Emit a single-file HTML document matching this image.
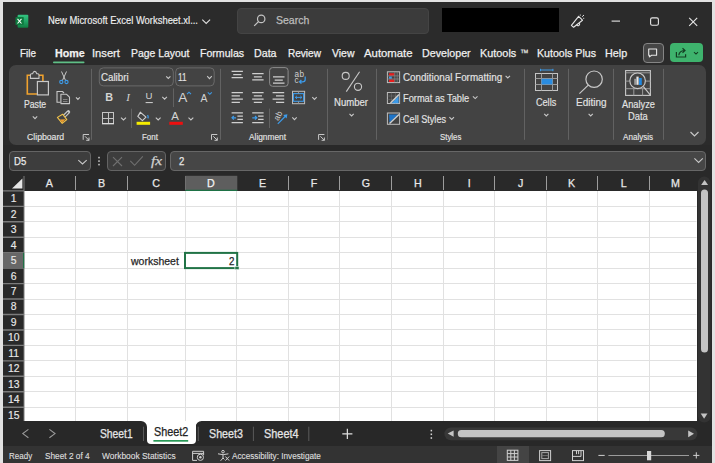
<!DOCTYPE html>
<html><head><meta charset="utf-8"><style>
html,body{margin:0;padding:0}
body{width:715px;height:463px;overflow:hidden;position:relative;background:#262626;font-family:"Liberation Sans",sans-serif}
.a{position:absolute;box-sizing:border-box}
.t{position:absolute;white-space:pre;line-height:1;transform-origin:0 0;-webkit-text-stroke:0.25px currentColor}
svg{position:absolute;overflow:visible}

</style></head><body>
<!-- window borders -->
<div class="a" style="left:0;top:0;width:715px;height:2px;background:#e2e2e2"></div>
<div class="a" style="left:0;top:0;width:3px;height:463px;background:#e2e2e2"></div>
<div class="a" style="left:712px;top:0;width:3px;height:463px;background:#e2e2e2"></div>
<!-- title bar -->
<div class="a" style="left:3px;top:2px;width:709px;height:143.4px;background:#2b2b2b"></div>
<div class="a" style="left:236.5px;top:8px;width:192px;height:26px;background:#3b3b3b;border:1px solid #444;border-radius:4px"></div>
<div class="a" style="left:442px;top:8px;width:117px;height:24px;background:#000"></div>
<!-- comment/share buttons -->
<div class="a" style="left:642.7px;top:43px;width:21px;height:19.8px;background:#464646;border:1px solid #858585;border-radius:4px"></div>
<div class="a" style="left:669.9px;top:43px;width:33.1px;height:19.3px;background:#3eb36d;border-radius:4px"></div>
<!-- ribbon panel -->
<div class="a" style="left:9px;top:65.4px;width:697px;height:80px;background:#434343;border-radius:7px"></div>
<!-- formula bar -->
<div class="a" style="left:3px;top:145.4px;width:709px;height:30.5px;background:#292929"></div>
<div class="a" style="left:9px;top:151.3px;width:82px;height:19.6px;background:#3d3d3d;border:1px solid #646464;border-radius:4px"></div>
<div class="a" style="left:107.2px;top:151.3px;width:59.2px;height:19.6px;background:#3d3d3d;border:1px solid #646464;border-radius:4px"></div>
<div class="a" style="left:169.8px;top:151.3px;width:536px;height:19.6px;background:#464646;border:1px solid #676767;border-radius:4px"></div>
<!-- headers -->
<div class="a" style="left:3px;top:175.8px;width:694px;height:15.1px;background:#292929"></div>
<div class="a" style="left:3px;top:190.9px;width:21px;height:230.1px;background:#292929"></div>
<!-- grid -->
<div class="a" style="left:24px;top:190.9px;width:672.5px;height:230.1px;background:#fff"></div>
<!-- scrollbar area -->
<div class="a" style="left:696.5px;top:175.8px;width:15.5px;height:245.2px;background:#292929"></div>
<!-- sheet tab bar -->
<div class="a" style="left:3px;top:421px;width:709px;height:25px;background:#282828"></div>
<!-- status bar -->
<div class="a" style="left:3px;top:446px;width:709px;height:17px;background:#333"></div>
<div class="a" style="left:497.2px;top:446px;width:32px;height:17px;background:#444"></div>
<!-- active sheet tab -->
<div class="a" style="left:147px;top:421px;width:48.6px;height:22.5px;background:#fff;border-radius:0 0 4px 4px"></div>
<svg style="left:0;top:0" width="715" height="463" viewBox="0 0 715 463">
<defs>
<linearGradient id="xg" x1="0" y1="0" x2="0" y2="1"><stop offset="0" stop-color="#33c481"/><stop offset="0.5" stop-color="#21a366"/><stop offset="1" stop-color="#107c41"/></linearGradient>
</defs>
<!-- excel logo -->
<rect x="17.6" y="14.8" width="10.7" height="13" rx="1" fill="url(#xg)"/>
<rect x="15.5" y="16.9" width="8.3" height="8.1" rx="0.8" fill="#0f7a3f"/>
<path d="M17.5,18.9 L21.5,23.5 M21.5,18.9 L17.5,23.5" stroke="#fff" stroke-width="1.05"/>
<!-- search icon -->
<circle cx="261.2" cy="18.9" r="3.7" fill="none" stroke="#c4c4c4" stroke-width="1.2"/>
<path d="M258.5,21.6 L254.2,25.9" stroke="#c4c4c4" stroke-width="1.3"/>
<!-- megaphone -->
<path d="M571.4,25.4 L578.6,16.3 L582.5,20.2 L573.6,27.3 Z" fill="none" stroke="#e6e6e6" stroke-width="1.1" stroke-linejoin="round"/>
<path d="M576.6,24.9 A1.6,1.6 0 0 0 579.4,23.2" fill="none" stroke="#e6e6e6" stroke-width="1.1"/>
<path d="M580.3,14.6 v1 M582.2,16.7 L584,15 M583.2,18.3 h1" stroke="#e6e6e6" stroke-width="1"/>
<!-- window controls -->
<path d="M611.6,21.1 H620" stroke="#e6e6e6" stroke-width="1.1"/>
<rect x="650.6" y="17.9" width="7.8" height="7.4" rx="1.6" fill="none" stroke="#e6e6e6" stroke-width="1.1"/>
<path d="M689.2,17.8 L697.2,25.8 M697.2,17.8 L689.2,25.8" stroke="#e6e6e6" stroke-width="1.1"/>
<!-- comment icon -->
<path d="M648.7,49 H656.6 V55.3 H651.6 L649.4,56.9 V55.3 H648.7 Z" fill="none" stroke="#e6e6e6" stroke-width="1.1" stroke-linejoin="round"/>
<!-- share icon -->
<path d="M676.4,52 V57 H685.6 V54.2" fill="none" stroke="#143d22" stroke-width="1.2"/>
<path d="M678.8,55.3 Q679.3,50.8 684.5,50.5 M682.5,48.2 L685,50.5 L682.5,52.8" fill="none" stroke="#143d22" stroke-width="1.2"/>
<path d="M694,52.2 L696,54.1 L698,52.2" fill="none" stroke="#143d22" stroke-width="1.1"/>
<!-- home underline -->
<rect x="53" y="61.6" width="31.5" height="1.7" rx="0.8" fill="#5fbf86"/>
<!-- ribbon separators -->
<g stroke="#626262" stroke-width="1">
<path d="M91.5,68.8 V139.8 M220.5,68.8 V139.8 M327.5,68.8 V139.8 M376.5,68.8 V139.8 M524.5,68.8 V139.8 M568.5,68.8 V139.8 M613.5,68.8 V139.8 M663.5,68.8 V139.8"/>
<path d="M173.5,88.4 V107 M131.5,108.7 V128 M269.5,108.6 V128"/>
</g>
<!-- PASTE -->
<path d="M30.8,75.2 H27.3 V94 H37.2" fill="none" stroke="#f0a22e" stroke-width="1.6"/>
<path d="M38.6,75.2 H42.9 V81.2" fill="none" stroke="#f0a22e" stroke-width="1.6"/>
<path d="M30.4,78.4 V75 Q30.4,73.8 31.6,73.8 H32.6 Q33.2,71.4 34.7,71.4 Q36.2,71.4 36.8,73.8 H37.8 Q39,73.8 39,75 V78.4 Z" fill="#434343" stroke="#c8c8c8" stroke-width="1.1" stroke-linejoin="round"/>
<rect x="37.4" y="81.5" width="11" height="13.4" fill="#434343" stroke="#c8c8c8" stroke-width="1.2"/>
<!-- chevrons -->
<g fill="none" stroke="#c8c8c8" stroke-width="1.1">
<path d="M32.8,116.4 L35,118.6 L37.2,116.4"/>
<path d="M76,97.4 L77.9,99.4 L79.8,97.4"/>
<path d="M162.3,96.8 L164.6,99.1 L166.9,96.8"/>
<path d="M121,117.6 L123.5,120 L126,117.6"/>
<path d="M155.8,117.6 L158.2,120 L160.6,117.6"/>
<path d="M188.5,117.6 L190.9,120 L193.3,117.6"/>
<path d="M312.3,97.1 L314.5,99.4 L316.7,97.1"/>
<path d="M292.3,117.4 L294.5,119.6 L296.7,117.4"/>
<path d="M349.5,113.8 L351.6,116 L353.7,113.8"/>
<path d="M505.6,75.8 L507.8,78 L510,75.8"/>
<path d="M472.9,96.4 L475.2,98.6 L477.5,96.4"/>
<path d="M449.4,117.2 L451.7,119.4 L454,117.2"/>
<path d="M544.2,113.8 L546.3,116 L548.4,113.8"/>
<path d="M588.6,113.8 L590.7,116 L592.8,113.8"/>
<path d="M166.2,76.3 L168.3,78.5 L170.4,76.3"/>
<path d="M207.2,76.2 L209.5,78.6 L211.8,76.2"/>
<path d="M78.3,160.1 L82.5,164 L86.7,160.1"/>
<path d="M694.4,158.4 L698.6,162.4 L702.8,158.4"/>
<path d="M690.5,132 L694.5,136 L698.5,132" stroke-width="1.2"/>
</g>
<!-- scissors -->
<g fill="none" stroke="#c8c8c8" stroke-width="1">
<path d="M61.5,71.5 L65.6,80.6 M66.5,71.5 L62.4,80.6"/>
</g>
<circle cx="61.3" cy="82" r="1.6" fill="none" stroke="#3d9be9" stroke-width="1.1"/>
<circle cx="66.5" cy="82" r="1.6" fill="none" stroke="#3d9be9" stroke-width="1.1"/>
<!-- copy -->
<path d="M60.5,102.3 H57 V91.5 H62.5 L64,93" fill="none" stroke="#c8c8c8" stroke-width="1.1"/>
<path d="M60.9,94.3 H66.6 L69.5,97.2 V103.6 H60.9 Z" fill="#434343" stroke="#c8c8c8" stroke-width="1.1" stroke-linejoin="round"/>
<path d="M63,99.5 H67.5 M63,101.5 H67.5" stroke="#8a8a8a" stroke-width="0.9"/>
<!-- format painter -->
<path d="M63.6,116.8 L68.4,112" stroke="#c8c8c8" stroke-width="3.6" stroke-linecap="round"/>
<path d="M64.2,116.2 L67.8,112.6" stroke="#434343" stroke-width="1.3" stroke-linecap="round"/>
<path d="M57.4,117.4 L62.6,114.2 L66.8,119.6 L62.2,123.3 Z" fill="#434343" stroke="#f2c24a" stroke-width="1.1" stroke-linejoin="round"/>
<path d="M59.8,119.6 L65.6,119.2 L62.2,122.6 Z" fill="#ec9a2c"/>
<!-- dialog launchers -->
<g fill="none" stroke="#c8c8c8" stroke-width="1">
<path d="M83.2,139.8 V134.5 H89 M85,136.3 L89,140.3 M89,137.5 V140.3 H86.2"/>
<path d="M211.5,139.8 V134.5 H217.3 M213.3,136.3 L217.3,140.3 M217.3,137.5 V140.3 H214.5"/>
<path d="M318.6,139.8 V134.5 H324.4 M320.4,136.3 L324.4,140.3 M324.4,137.5 V140.3 H321.6"/>
</g>
<!-- B I U -->
<text x="105.2" y="100.9" font-family="Liberation Sans" font-weight="700" font-size="10.8" fill="#d4d4d4">B</text>
<text x="126.3" y="100.9" font-family="Liberation Serif" font-style="italic" font-size="11" fill="#d4d4d4">I</text>
<text x="145.4" y="99" font-family="Liberation Sans" font-size="9.6" fill="#d4d4d4">U</text>
<path d="M145.6,102.6 H152.8" stroke="#d4d4d4" stroke-width="1"/>
<!-- grow/shrink font -->
<text x="178.2" y="102.1" font-family="Liberation Sans" font-size="13.6" fill="#d4d4d4">A</text>
<path d="M187,94.2 L189,92.2 L191,94.2" fill="none" stroke="#3d9be9" stroke-width="1.1"/>
<text x="200.6" y="102.1" font-family="Liberation Sans" font-size="10.4" fill="#d4d4d4">A</text>
<path d="M207.8,92.3 L209.8,94.3 L211.8,92.3" fill="none" stroke="#3d9be9" stroke-width="1.1"/>
<!-- borders icon -->
<g fill="none" stroke="#c4c4c4" stroke-width="1">
<rect x="102.5" y="112.5" width="11" height="11"/>
<path d="M108.5,112.5 V123.5 M102.5,118.5 H113.5"/>
</g>
<path d="M102,123.7 H114" stroke="#dcdcdc" stroke-width="1.3"/>
<!-- fill color -->
<path d="M140.5,112.4 L146,117.2 L142.4,120.6 L137.8,116.4 Z" fill="none" stroke="#d0d0d0" stroke-width="1.1" stroke-linejoin="round"/>
<path d="M138.8,113.8 L141,111.8" stroke="#d0d0d0" stroke-width="1"/>
<path d="M147.6,115 Q148.7,117 147.8,118.4" fill="none" stroke="#3d9be9" stroke-width="1.3"/>
<rect x="136.6" y="121.8" width="13.5" height="3" fill="#f5ec00"/>
<!-- font color -->
<text x="171.3" y="120.3" font-family="Liberation Sans" font-size="11.4" fill="#d4d4d4">A</text>
<rect x="169.3" y="121.8" width="13.5" height="3" fill="#ee0f0f"/>
<!-- alignment lines -->
<g stroke="#cfcfcf" stroke-width="1.25">
<path d="M231.6,71.4 H242.9 M233.2,74.5 H241.4 M231.6,77.7 H242.9"/>
<path d="M252.2,73.6 H263.6 M253.9,76.8 H261.9 M252.2,79.9 H263.6"/>
<path d="M273,76.9 H284.5 M274.7,80 H282.8 M273,83.1 H284.5"/>
<path d="M231.6,92.6 H242.9 M231.6,95.8 H239.9 M231.6,99 H242.9 M231.6,102.3 H239.9"/>
<path d="M252.2,92.6 H263.6 M253.8,95.8 H262 M252.2,99 H263.6 M253.8,102.3 H262"/>
<path d="M272.6,92.6 H284.2 M276,95.8 H284.2 M272.6,99 H284.2 M276,102.3 H284.2"/>
<path d="M231.6,112.9 H242.9 M237.4,116.1 H242.9 M237.4,119.4 H242.9 M231.6,122.7 H242.9"/>
<path d="M252.2,112.9 H263.6 M258.1,116.1 H263.6 M258.1,119.4 H263.6 M252.2,122.7 H263.6"/>
</g>
<rect x="269.6" y="67.6" width="18.5" height="18.7" rx="3" fill="none" stroke="#8c8c8c" stroke-width="1"/>
<!-- indent arrows -->
<path d="M236,117.8 H232 M233.8,116 L232,117.8 L233.8,119.6" fill="none" stroke="#3d9be9" stroke-width="1.2"/>
<path d="M252.3,117.8 H256.8 M255,116 L256.8,117.8 L255,119.6" fill="none" stroke="#3d9be9" stroke-width="1.2"/>
<!-- wrap text -->
<text x="294.6" y="77.3" font-family="Liberation Sans" font-size="8.2" fill="#d0d0d0" letter-spacing="0.3">ab</text>
<text x="294.4" y="82.6" font-family="Liberation Sans" font-size="8.2" fill="#d0d0d0">c</text>
<path d="M305.2,76.6 V79.4 Q305.2,81.8 302.6,81.8 H299.6 M301.4,80 L299.5,81.8 L301.4,83.6" fill="none" stroke="#3d9be9" stroke-width="1.3"/>
<!-- merge -->
<rect x="292.5" y="91.3" width="12.1" height="12.4" fill="none" stroke="#bdbdbd" stroke-width="1"/>
<rect x="293.5" y="93.6" width="10.1" height="7.7" fill="none" stroke="#3d9be9" stroke-width="1.1"/>
<path d="M298.5,91.3 V93.6 M298.5,101.3 V103.7" stroke="#9a9a9a" stroke-width="0.9"/>
<path d="M295.4,97.4 H301.8 M296.9,95.9 L295.3,97.4 L296.9,98.9 M300.3,95.9 L301.9,97.4 L300.3,98.9" fill="none" stroke="#3d9be9" stroke-width="1"/>
<!-- orientation -->
<text x="0" y="0" font-family="Liberation Sans" font-size="8.4" fill="#d0d0d0" transform="translate(278.2,121.2) rotate(-62)">ab</text>
<path d="M277.8,123.8 L285.6,116" fill="none" stroke="#3d9be9" stroke-width="1.2"/><path d="M287.4,114.2 L286.6,118.4 L283.2,115 Z" fill="#3d9be9"/>
<!-- percent -->
<circle cx="345.7" cy="75.9" r="3.5" fill="none" stroke="#c8c8c8" stroke-width="1.1"/>
<circle cx="358" cy="86.8" r="3.6" fill="none" stroke="#c8c8c8" stroke-width="1.1"/>
<path d="M359.6,71.8 L346.3,91.6" stroke="#c8c8c8" stroke-width="1.1"/>
<!-- conditional formatting icon -->
<rect x="387.4" y="71.8" width="12.2" height="10.8" fill="none" stroke="#bdbdbd" stroke-width="1"/>
<rect x="389" y="73.2" width="5.4" height="2.6" fill="#e81e1e"/>
<rect x="389" y="76.5" width="2.8" height="2.3" fill="#3d9be9"/>
<rect x="389" y="79.4" width="5.4" height="2.6" fill="#e81e1e"/>
<path d="M394.8,71.8 V82.6 M397.2,71.8 V82.6 M387.4,75.9 H399.6 M387.4,79 H399.6" stroke="#8a8a8a" stroke-width="0.7"/>
<!-- format as table icon -->
<rect x="387.4" y="92.5" width="12.2" height="11" fill="none" stroke="#bdbdbd" stroke-width="1"/>
<path d="M391.4,92.5 V103.5 M395.4,92.5 V103.5 M387.4,96 H399.6 M387.4,99.6 H399.6" stroke="#8a8a8a" stroke-width="0.7" stroke-dasharray="1,1"/>
<path d="M391.5,103.3 L398.6,96 V103.3 Z" fill="#3d9be9"/>
<path d="M390.5,103 L399,94.5" stroke="#d0d0d0" stroke-width="1.4"/>
<!-- cell styles icon -->
<rect x="387.4" y="113" width="12.2" height="11.3" fill="none" stroke="#bdbdbd" stroke-width="1"/>
<path d="M389,114.6 H398 L389.5,122.6 Z" fill="#1e74c8"/>
<path d="M389.5,123.5 L399,114.4" stroke="#d0d0d0" stroke-width="1.4"/>
<!-- cells icon -->
<rect x="535.5" y="73.5" width="22" height="17" fill="none" stroke="#c4c4c4" stroke-width="1"/>
<path d="M541.5,73.5 V90.5 M552.5,73.5 V90.5 M535.5,78.5 H557.5 M535.5,84.5 H557.5" stroke="#9a9a9a" stroke-width="1"/>
<rect x="541.5" y="78.8" width="11" height="5.6" fill="#2a8ce0"/>
<path d="M540.2,70 H553.2 M540.5,68.8 V71.2 M552.9,68.8 V71.2" stroke="#3d9be9" stroke-width="1"/>
<!-- editing magnifier -->
<circle cx="594.1" cy="79.2" r="8.2" fill="none" stroke="#c8c8c8" stroke-width="1.2"/>
<path d="M588.3,85.1 L579.4,93.6" stroke="#c8c8c8" stroke-width="1.2"/>
<!-- analyze data icon -->
<rect x="625.6" y="70.6" width="24.8" height="24.8" fill="none" stroke="#c8c8c8" stroke-width="1.1"/>
<path d="M625.6,72.8 H650.4 M625.6,88.7 H650.4 M633.8,88.7 V95.4 M642.6,88.7 V95.4 M625.6,81.1 H629.4 M646,81.1 H650.4" stroke="#9a9a9a" stroke-width="1"/>
<circle cx="637.6" cy="80.8" r="7.8" fill="#434343" stroke="#c8c8c8" stroke-width="1.2"/>
<path d="M643.4,86.6 L650.6,95.3" stroke="#c8c8c8" stroke-width="1.2"/>
<rect x="634.2" y="78.8" width="1.8" height="6" fill="#9a9a9a"/>
<rect x="636.4" y="76.6" width="2.2" height="8.2" fill="#e6e6e6"/>
<rect x="639" y="78" width="2.8" height="7" fill="#1f86de"/>
</svg>
<svg style="left:0;top:0" width="715" height="463" viewBox="0 0 715 463">
<path d="M75.5,191 V421 M127.5,191 V421 M185.5,191 V421 M236.5,191 V421 M288.5,191 V421 M339.5,191 V421 M391.5,191 V421 M443.5,191 V421 M494.5,191 V421 M546.5,191 V421 M597.5,191 V421 M649.5,191 V421 M24,206.5 H696.5 M24,221.5 H696.5 M24,237.5 H696.5 M24,252.5 H696.5 M24,268.5 H696.5 M24,283.5 H696.5 M24,299.5 H696.5 M24,314.5 H696.5 M24,329.5 H696.5 M24,345.5 H696.5 M24,360.5 H696.5 M24,376.5 H696.5 M24,391.5 H696.5 M24,407.5 H696.5" stroke="#e1e1e1" stroke-width="1" fill="none"/>
<path d="M75.5,176 V190 M127.5,176 V190 M185.5,176 V190 M236.5,176 V190 M288.5,176 V190 M339.5,176 V190 M391.5,176 V190 M443.5,176 V190 M494.5,176 V190 M546.5,176 V190 M597.5,176 V190 M649.5,176 V190" stroke="#9c9c9c" stroke-width="1" fill="none"/>
<path d="M3,190.90 H24 M3,206.35 H24 M3,221.80 H24 M3,237.25 H24 M3,252.70 H24 M3,268.15 H24 M3,283.60 H24 M3,299.05 H24 M3,314.50 H24 M3,329.95 H24 M3,345.40 H24 M3,360.85 H24 M3,376.30 H24 M3,391.75 H24 M3,407.20 H24" stroke="#7c7c7c" stroke-width="1.4" fill="none"/>
<path d="M24,176 V421" stroke="#7a7a7a" stroke-width="1"/>
<rect x="185.3" y="175.8" width="52" height="14.6" fill="#5e5e5e"/>
<path d="M185.3,190.4 H237.3" stroke="#1e7145" stroke-width="1.2"/>
<rect x="3" y="252.70" width="20.6" height="15.45" fill="#676767"/>
<path d="M23.6,252.70 V268.15" stroke="#1e7145" stroke-width="1.2"/>
<path d="M12,188.6 L22.4,178.6 V188.6 Z" fill="#e6e6e6"/>
<rect x="185" y="252.9" width="52.2" height="15.2" fill="none" stroke="#217346" stroke-width="2"/>
<rect x="234.9" y="266.3" width="4.2" height="3.4" fill="#217346" stroke="#fff" stroke-width="0.6"/>
</svg><svg style="left:0;top:0" width="715" height="463" viewBox="0 0 715 463">
<!-- font name / size boxes -->
<rect x="99.3" y="67.9" width="74" height="18" rx="4" fill="none" stroke="#6a6a6a" stroke-width="1"/>
<rect x="175.7" y="67.9" width="38.5" height="18" rx="4" fill="none" stroke="#6a6a6a" stroke-width="1"/>
<!-- three dots -->
<g fill="#d8d8d8"><rect x="98.3" y="156.8" width="1.4" height="1.6"/><rect x="98.3" y="160.3" width="1.4" height="1.6"/><rect x="98.3" y="163.8" width="1.4" height="1.6"/></g>
<!-- X and check -->
<path d="M113,157.2 L122,166 M122,157.2 L113,166" stroke="#707070" stroke-width="1.1"/>
<path d="M130.3,160.8 L134.6,165.3 L142.8,156.3" fill="none" stroke="#707070" stroke-width="1.1"/>
<!-- vertical scrollbar -->
<rect x="698" y="176.6" width="12.5" height="246" rx="6.2" fill="#333"/>
<path d="M701.1,185 L704.6,180 L708.1,185 Z" fill="#c4c4c4"/>
<rect x="701" y="189.6" width="7" height="163" rx="3.5" fill="#c4c4c4"/>
<path d="M700.7,413.5 L707.5,413.5 L704.1,418.7 Z" fill="#c4c4c4"/>
<!-- title chevron -->
<path d="M202.3,19.6 L206.2,23.4 L210.1,19.6" fill="none" stroke="#e0e0e0" stroke-width="1.1"/>
<!-- sheet2 underline -->
<rect x="153.4" y="440" width="34.8" height="1.7" fill="#2a9a58"/>
<!-- tab bar corners -->
<path d="M141,421 H147 V427 A6,6 0 0 0 141,421 Z" fill="#fff"/>
<path d="M201.6,421 H195.6 V427 A6,6 0 0 1 201.6,421 Z" fill="#fff"/>
<!-- sheet tab separators -->
<g stroke="#5a5a5a" stroke-width="1">
<path d="M143.5,426.7 V441 M198.3,426.7 V441 M253.4,426.7 V441 M308.8,426.7 V441"/>
</g>
<!-- nav arrows -->
<path d="M28.4,429.4 L22.8,433.6 L28.4,437.8" fill="none" stroke="#9a9a9a" stroke-width="1.1"/>
<path d="M49.4,429.4 L55,433.6 L49.4,437.8" fill="none" stroke="#9a9a9a" stroke-width="1.1"/>
<!-- plus -->
<path d="M342.3,433.9 H352.4 M347.35,428.8 V438.9" stroke="#e0e0e0" stroke-width="1.2"/>
<!-- vertical dots -->
<g fill="#d8d8d8"><rect x="430.6" y="429.8" width="1.5" height="1.6"/><rect x="430.6" y="433.5" width="1.5" height="1.6"/><rect x="430.6" y="437.2" width="1.5" height="1.6"/></g>
<!-- horizontal scrollbar -->
<rect x="444.4" y="427.6" width="253" height="12.6" rx="6.3" fill="#383838"/>
<path d="M447.7,433.6 L453.6,430.4 V436.8 Z" fill="#c4c4c4"/>
<rect x="457.8" y="430.1" width="207" height="7.1" rx="3.5" fill="#c4c4c4"/>
<path d="M694,433.8 L688.2,430.4 V437.2 Z" fill="#c4c4c4"/>
<!-- status icons -->
<g fill="none" stroke="#d0d0d0" stroke-width="1">
<rect x="507.3" y="450.2" width="10.6" height="10.2"/>
<path d="M510.8,450.2 V460.4 M514.4,450.2 V460.4 M507.3,453.6 H517.9 M507.3,457 H517.9"/>
<rect x="539.6" y="450.6" width="11" height="10"/>
<rect x="541.8" y="452.6" width="6.6" height="6" stroke="#a8a8a8"/><path d="M542,455.6 H548.2" stroke="#707070"/>
<rect x="572.5" y="450.6" width="11" height="10"/><path d="M581,450.6 V456.4 H572.5 M576.5,450.6 V454.2 M578.6,450.6 V454.2"/>
</g>
<path d="M598.4,455.4 H604.7" stroke="#d0d0d0" stroke-width="1"/>
<path d="M608.4,455.5 H689" stroke="#9a9a9a" stroke-width="1"/>
<rect x="647" y="451" width="4.2" height="9.3" fill="#d8d8d8"/>
<path d="M693.2,455.4 H699.4 M696.3,452.3 V458.5" stroke="#d0d0d0" stroke-width="1"/>
<!-- workbook statistics icon -->
<g fill="none" stroke="#d0d0d0" stroke-width="1">
<path d="M203.6,455 V451.3 H192.6 V460.4 H197"/>
<path d="M192.6,453.4 H203.6"/>
<circle cx="200.4" cy="457.3" r="3.1"/>
</g>
<circle cx="200.4" cy="457.3" r="1.2" fill="#d0d0d0"/>
<!-- accessibility icon -->
<g fill="none" stroke="#d0d0d0" stroke-width="1">
<circle cx="223" cy="451.7" r="1.3"/>
<path d="M218,453.8 Q223,455.6 228.4,453.8 M223,455 V458 L220.6,460.8 M223,458 L224.4,459.4"/>
<path d="M225.4,456.5 L229.2,460.6 M229.2,456.5 L225.4,460.6"/>
</g>
</svg>

<div class="t" style="-webkit-text-stroke:0.15px currentColor;left:47.80px;top:16.28px;font-size:10.3px;color:#f0f0f0;font-weight:400;font-family:'Liberation Sans';font-style:normal;transform:scaleX(0.9144);">New Microsoft Excel Worksheet.xl...</div>
<div class="t" style="-webkit-text-stroke:0.25px currentColor;left:275.50px;top:15.03px;font-size:11.3px;color:#bdbdbd;font-weight:400;font-family:'Liberation Sans';font-style:normal;transform:scaleX(0.9293);">Search</div>
<div class="t" style="-webkit-text-stroke:0.25px currentColor;left:20.10px;top:47.73px;font-size:11.3px;color:#f0f0f0;font-weight:400;font-family:'Liberation Sans';font-style:normal;transform:scaleX(0.8761);">File</div>
<div class="t" style="-webkit-text-stroke:0.25px currentColor;left:54.50px;top:47.73px;font-size:11.3px;color:#f2f2f2;font-weight:700;font-family:'Liberation Sans';font-style:normal;transform:scaleX(0.9452);">Home</div>
<div class="t" style="-webkit-text-stroke:0.25px currentColor;left:92.01px;top:47.73px;font-size:11.3px;color:#f0f0f0;font-weight:400;font-family:'Liberation Sans';font-style:normal;transform:scaleX(0.9888);">Insert</div>
<div class="t" style="-webkit-text-stroke:0.25px currentColor;left:131.00px;top:47.73px;font-size:11.3px;color:#f0f0f0;font-weight:400;font-family:'Liberation Sans';font-style:normal;transform:scaleX(0.9207);">Page Layout</div>
<div class="t" style="-webkit-text-stroke:0.25px currentColor;left:200.30px;top:47.73px;font-size:11.3px;color:#f0f0f0;font-weight:400;font-family:'Liberation Sans';font-style:normal;transform:scaleX(0.9361);">Formulas</div>
<div class="t" style="-webkit-text-stroke:0.25px currentColor;left:254.30px;top:47.73px;font-size:11.3px;color:#f0f0f0;font-weight:400;font-family:'Liberation Sans';font-style:normal;transform:scaleX(0.9439);">Data</div>
<div class="t" style="-webkit-text-stroke:0.25px currentColor;left:287.50px;top:47.73px;font-size:11.3px;color:#f0f0f0;font-weight:400;font-family:'Liberation Sans';font-style:normal;transform:scaleX(0.8896);">Review</div>
<div class="t" style="-webkit-text-stroke:0.25px currentColor;left:331.50px;top:47.73px;font-size:11.3px;color:#f0f0f0;font-weight:400;font-family:'Liberation Sans';font-style:normal;transform:scaleX(0.9234);">View</div>
<div class="t" style="-webkit-text-stroke:0.25px currentColor;left:363.70px;top:47.73px;font-size:11.3px;color:#f0f0f0;font-weight:400;font-family:'Liberation Sans';font-style:normal;transform:scaleX(1.0048);">Automate</div>
<div class="t" style="-webkit-text-stroke:0.25px currentColor;left:421.50px;top:47.73px;font-size:11.3px;color:#f0f0f0;font-weight:400;font-family:'Liberation Sans';font-style:normal;transform:scaleX(0.9453);">Developer</div>
<div class="t" style="-webkit-text-stroke:0.25px currentColor;left:479.70px;top:47.73px;font-size:11.3px;color:#f0f0f0;font-weight:400;font-family:'Liberation Sans';font-style:normal;transform:scaleX(0.9624);">Kutools</div>
<div class="t" style="-webkit-text-stroke:0.15px currentColor;left:520.40px;top:48.98px;font-size:9.0px;color:#f0f0f0;font-weight:400;font-family:'Liberation Sans';font-style:normal;transform:scaleX(0.9625);">™</div>
<div class="t" style="-webkit-text-stroke:0.25px currentColor;left:536.50px;top:47.73px;font-size:11.3px;color:#f0f0f0;font-weight:400;font-family:'Liberation Sans';font-style:normal;transform:scaleX(0.9391);">Kutools Plus</div>
<div class="t" style="-webkit-text-stroke:0.25px currentColor;left:604.90px;top:47.73px;font-size:11.3px;color:#f0f0f0;font-weight:400;font-family:'Liberation Sans';font-style:normal;transform:scaleX(0.9542);">Help</div>
<div class="t" style="-webkit-text-stroke:0.15px currentColor;left:24.30px;top:100.08px;font-size:10.3px;color:#e4e4e4;font-weight:400;font-family:'Liberation Sans';font-style:normal;transform:scaleX(0.8420);">Paste</div>
<div class="t" style="-webkit-text-stroke:0.15px currentColor;left:26.70px;top:132.16px;font-size:9.5px;color:#e4e4e4;font-weight:400;font-family:'Liberation Sans';font-style:normal;transform:scaleX(0.9138);">Clipboard</div>
<div class="t" style="-webkit-text-stroke:0.15px currentColor;left:100.80px;top:72.63px;font-size:10.0px;color:#e4e4e4;font-weight:400;font-family:'Liberation Sans';font-style:normal;transform:scaleX(0.9745);">Calibri</div>
<div class="t" style="-webkit-text-stroke:0.15px currentColor;left:177.50px;top:72.63px;font-size:10.0px;color:#e4e4e4;font-weight:400;font-family:'Liberation Sans';font-style:normal;transform:scaleX(0.8134);">11</div>
<div class="t" style="-webkit-text-stroke:0.15px currentColor;left:141.90px;top:132.26px;font-size:9.5px;color:#e4e4e4;font-weight:400;font-family:'Liberation Sans';font-style:normal;transform:scaleX(0.8364);">Font</div>
<div class="t" style="-webkit-text-stroke:0.15px currentColor;left:248.80px;top:132.26px;font-size:9.5px;color:#e4e4e4;font-weight:400;font-family:'Liberation Sans';font-style:normal;transform:scaleX(0.8755);">Alignment</div>
<div class="t" style="-webkit-text-stroke:0.15px currentColor;left:334.40px;top:97.94px;font-size:10.0px;color:#e4e4e4;font-weight:400;font-family:'Liberation Sans';font-style:normal;transform:scaleX(0.9548);">Number</div>
<div class="t" style="-webkit-text-stroke:0.15px currentColor;left:403.00px;top:72.63px;font-size:10.0px;color:#e4e4e4;font-weight:400;font-family:'Liberation Sans';font-style:normal;transform:scaleX(0.9866);">Conditional Formatting</div>
<div class="t" style="-webkit-text-stroke:0.15px currentColor;left:403.00px;top:94.03px;font-size:10.0px;color:#e4e4e4;font-weight:400;font-family:'Liberation Sans';font-style:normal;transform:scaleX(0.9261);">Format as Table</div>
<div class="t" style="-webkit-text-stroke:0.15px currentColor;left:403.00px;top:114.83px;font-size:10.0px;color:#e4e4e4;font-weight:400;font-family:'Liberation Sans';font-style:normal;transform:scaleX(0.9103);">Cell Styles</div>
<div class="t" style="-webkit-text-stroke:0.15px currentColor;left:439.50px;top:132.26px;font-size:9.5px;color:#e4e4e4;font-weight:400;font-family:'Liberation Sans';font-style:normal;transform:scaleX(0.8231);">Styles</div>
<div class="t" style="-webkit-text-stroke:0.15px currentColor;left:536.30px;top:97.94px;font-size:10.0px;color:#e4e4e4;font-weight:400;font-family:'Liberation Sans';font-style:normal;transform:scaleX(0.9088);">Cells</div>
<div class="t" style="-webkit-text-stroke:0.15px currentColor;left:576.00px;top:97.94px;font-size:10.0px;color:#e4e4e4;font-weight:400;font-family:'Liberation Sans';font-style:normal;transform:scaleX(0.9995);">Editing</div>
<div class="t" style="-webkit-text-stroke:0.15px currentColor;left:621.60px;top:99.53px;font-size:10.0px;color:#e4e4e4;font-weight:400;font-family:'Liberation Sans';font-style:normal;transform:scaleX(0.9246);">Analyze</div>
<div class="t" style="-webkit-text-stroke:0.15px currentColor;left:628.30px;top:111.83px;font-size:10.0px;color:#e4e4e4;font-weight:400;font-family:'Liberation Sans';font-style:normal;transform:scaleX(0.9322);">Data</div>
<div class="t" style="-webkit-text-stroke:0.15px currentColor;left:623.00px;top:132.26px;font-size:9.5px;color:#e4e4e4;font-weight:400;font-family:'Liberation Sans';font-style:normal;transform:scaleX(0.8505);">Analysis</div>
<div class="t" style="-webkit-text-stroke:0.25px currentColor;left:13.90px;top:156.13px;font-size:10.6px;color:#e8e8e8;font-weight:400;font-family:'Liberation Sans';font-style:normal;transform:scaleX(0.9011);">D5</div>
<div class="t" style="-webkit-text-stroke:0.25px currentColor;left:179.00px;top:156.03px;font-size:10.6px;color:#e8e8e8;font-weight:400;font-family:'Liberation Sans';font-style:normal;transform:scaleX(0.9000);">2</div>
<div class="t" style="-webkit-text-stroke:0.25px currentColor;left:150.50px;top:155.03px;font-size:12.5px;color:#d0d0d0;font-weight:400;font-family:'Liberation Serif';font-style:italic;transform:scaleX(1.2351);">fx</div>
<div class="t" style="-webkit-text-stroke:0.25px currentColor;left:45.75px;top:178.24px;font-size:10.7px;color:#e8e8e8;font-weight:400;font-family:'Liberation Sans';font-style:normal;">A</div>
<div class="t" style="-webkit-text-stroke:0.25px currentColor;left:97.95px;top:178.24px;font-size:10.7px;color:#e8e8e8;font-weight:400;font-family:'Liberation Sans';font-style:normal;">B</div>
<div class="t" style="-webkit-text-stroke:0.25px currentColor;left:152.35px;top:178.24px;font-size:10.7px;color:#e8e8e8;font-weight:400;font-family:'Liberation Sans';font-style:normal;">C</div>
<div class="t" style="-webkit-text-stroke:0.25px currentColor;left:207.00px;top:178.24px;font-size:10.7px;color:#f4f4f4;font-weight:400;font-family:'Liberation Sans';font-style:normal;">D</div>
<div class="t" style="-webkit-text-stroke:0.25px currentColor;left:259.10px;top:178.24px;font-size:10.7px;color:#e8e8e8;font-weight:400;font-family:'Liberation Sans';font-style:normal;">E</div>
<div class="t" style="-webkit-text-stroke:0.25px currentColor;left:310.70px;top:178.24px;font-size:10.7px;color:#e8e8e8;font-weight:400;font-family:'Liberation Sans';font-style:normal;">F</div>
<div class="t" style="-webkit-text-stroke:0.25px currentColor;left:361.85px;top:178.24px;font-size:10.7px;color:#e8e8e8;font-weight:400;font-family:'Liberation Sans';font-style:normal;">G</div>
<div class="t" style="-webkit-text-stroke:0.25px currentColor;left:413.95px;top:178.24px;font-size:10.7px;color:#e8e8e8;font-weight:400;font-family:'Liberation Sans';font-style:normal;">H</div>
<div class="t" style="-webkit-text-stroke:0.25px currentColor;left:467.80px;top:178.24px;font-size:10.7px;color:#e8e8e8;font-weight:400;font-family:'Liberation Sans';font-style:normal;">I</div>
<div class="t" style="-webkit-text-stroke:0.25px currentColor;left:517.90px;top:178.24px;font-size:10.7px;color:#e8e8e8;font-weight:400;font-family:'Liberation Sans';font-style:normal;">J</div>
<div class="t" style="-webkit-text-stroke:0.25px currentColor;left:568.00px;top:178.24px;font-size:10.7px;color:#e8e8e8;font-weight:400;font-family:'Liberation Sans';font-style:normal;">K</div>
<div class="t" style="-webkit-text-stroke:0.25px currentColor;left:620.65px;top:178.24px;font-size:10.7px;color:#e8e8e8;font-weight:400;font-family:'Liberation Sans';font-style:normal;">L</div>
<div class="t" style="-webkit-text-stroke:0.25px currentColor;left:671.00px;top:178.24px;font-size:10.7px;color:#e8e8e8;font-weight:400;font-family:'Liberation Sans';font-style:normal;">M</div>
<div class="t" style="-webkit-text-stroke:0.15px currentColor;left:10.80px;top:194.32px;font-size:10.4px;color:#e8e8e8;font-weight:400;font-family:'Liberation Sans';font-style:normal;">1</div>
<div class="t" style="-webkit-text-stroke:0.15px currentColor;left:10.80px;top:209.77px;font-size:10.4px;color:#e8e8e8;font-weight:400;font-family:'Liberation Sans';font-style:normal;">2</div>
<div class="t" style="-webkit-text-stroke:0.15px currentColor;left:10.80px;top:225.22px;font-size:10.4px;color:#e8e8e8;font-weight:400;font-family:'Liberation Sans';font-style:normal;">3</div>
<div class="t" style="-webkit-text-stroke:0.15px currentColor;left:10.80px;top:240.67px;font-size:10.4px;color:#e8e8e8;font-weight:400;font-family:'Liberation Sans';font-style:normal;">4</div>
<div class="t" style="-webkit-text-stroke:0.15px currentColor;left:10.80px;top:256.12px;font-size:10.4px;color:#e8e8e8;font-weight:400;font-family:'Liberation Sans';font-style:normal;">5</div>
<div class="t" style="-webkit-text-stroke:0.15px currentColor;left:10.80px;top:271.57px;font-size:10.4px;color:#e8e8e8;font-weight:400;font-family:'Liberation Sans';font-style:normal;">6</div>
<div class="t" style="-webkit-text-stroke:0.15px currentColor;left:10.80px;top:287.02px;font-size:10.4px;color:#e8e8e8;font-weight:400;font-family:'Liberation Sans';font-style:normal;">7</div>
<div class="t" style="-webkit-text-stroke:0.15px currentColor;left:10.80px;top:302.47px;font-size:10.4px;color:#e8e8e8;font-weight:400;font-family:'Liberation Sans';font-style:normal;">8</div>
<div class="t" style="-webkit-text-stroke:0.15px currentColor;left:10.80px;top:317.92px;font-size:10.4px;color:#e8e8e8;font-weight:400;font-family:'Liberation Sans';font-style:normal;">9</div>
<div class="t" style="-webkit-text-stroke:0.15px currentColor;left:7.91px;top:333.37px;font-size:10.4px;color:#e8e8e8;font-weight:400;font-family:'Liberation Sans';font-style:normal;">10</div>
<div class="t" style="-webkit-text-stroke:0.15px currentColor;left:8.30px;top:348.82px;font-size:10.4px;color:#e8e8e8;font-weight:400;font-family:'Liberation Sans';font-style:normal;">11</div>
<div class="t" style="-webkit-text-stroke:0.15px currentColor;left:7.91px;top:364.27px;font-size:10.4px;color:#e8e8e8;font-weight:400;font-family:'Liberation Sans';font-style:normal;">12</div>
<div class="t" style="-webkit-text-stroke:0.15px currentColor;left:7.91px;top:379.72px;font-size:10.4px;color:#e8e8e8;font-weight:400;font-family:'Liberation Sans';font-style:normal;">13</div>
<div class="t" style="-webkit-text-stroke:0.15px currentColor;left:7.91px;top:395.17px;font-size:10.4px;color:#e8e8e8;font-weight:400;font-family:'Liberation Sans';font-style:normal;">14</div>
<div class="t" style="-webkit-text-stroke:0.15px currentColor;left:7.91px;top:410.62px;font-size:10.4px;color:#e8e8e8;font-weight:400;font-family:'Liberation Sans';font-style:normal;">15</div>
<div class="t" style="-webkit-text-stroke:0.25px currentColor;left:130.99px;top:256.13px;font-size:10.6px;color:#262626;font-weight:400;font-family:'Liberation Sans';font-style:normal;transform:scaleX(0.9911);">worksheet</div>
<div class="t" style="-webkit-text-stroke:0.25px currentColor;left:228.70px;top:256.13px;font-size:10.6px;color:#262626;font-weight:400;font-family:'Liberation Sans';font-style:normal;transform:scaleX(0.9167);">2</div>
<div class="t" style="-webkit-text-stroke:0.25px currentColor;left:100.00px;top:428.19px;font-size:12.3px;color:#e6e6e6;font-weight:400;font-family:'Liberation Sans';font-style:normal;transform:scaleX(0.8381);">Sheet1</div>
<div class="t" style="-webkit-text-stroke:0.25px currentColor;left:153.80px;top:425.79px;font-size:12.3px;color:#222222;font-weight:400;font-family:'Liberation Sans';font-style:normal;transform:scaleX(0.8790);">Sheet2</div>
<div class="t" style="-webkit-text-stroke:0.25px currentColor;left:208.80px;top:428.19px;font-size:12.3px;color:#e6e6e6;font-weight:400;font-family:'Liberation Sans';font-style:normal;transform:scaleX(0.8688);">Sheet3</div>
<div class="t" style="-webkit-text-stroke:0.25px currentColor;left:263.50px;top:428.19px;font-size:12.3px;color:#e6e6e6;font-weight:400;font-family:'Liberation Sans';font-style:normal;transform:scaleX(0.8867);">Sheet4</div>
<div class="t" style="-webkit-text-stroke:0.15px currentColor;left:8.60px;top:451.37px;font-size:9.6px;color:#dcdcdc;font-weight:400;font-family:'Liberation Sans';font-style:normal;transform:scaleX(0.8341);">Ready</div>
<div class="t" style="-webkit-text-stroke:0.15px currentColor;left:44.80px;top:451.37px;font-size:9.6px;color:#dcdcdc;font-weight:400;font-family:'Liberation Sans';font-style:normal;transform:scaleX(0.8625);">Sheet 2 of 4</div>
<div class="t" style="-webkit-text-stroke:0.15px currentColor;left:102.40px;top:451.37px;font-size:9.6px;color:#dcdcdc;font-weight:400;font-family:'Liberation Sans';font-style:normal;transform:scaleX(0.8758);">Workbook Statistics</div>
<div class="t" style="-webkit-text-stroke:0.15px currentColor;left:232.00px;top:451.37px;font-size:9.6px;color:#dcdcdc;font-weight:400;font-family:'Liberation Sans';font-style:normal;transform:scaleX(0.8549);">Accessibility: Investigate</div>
</body></html>
